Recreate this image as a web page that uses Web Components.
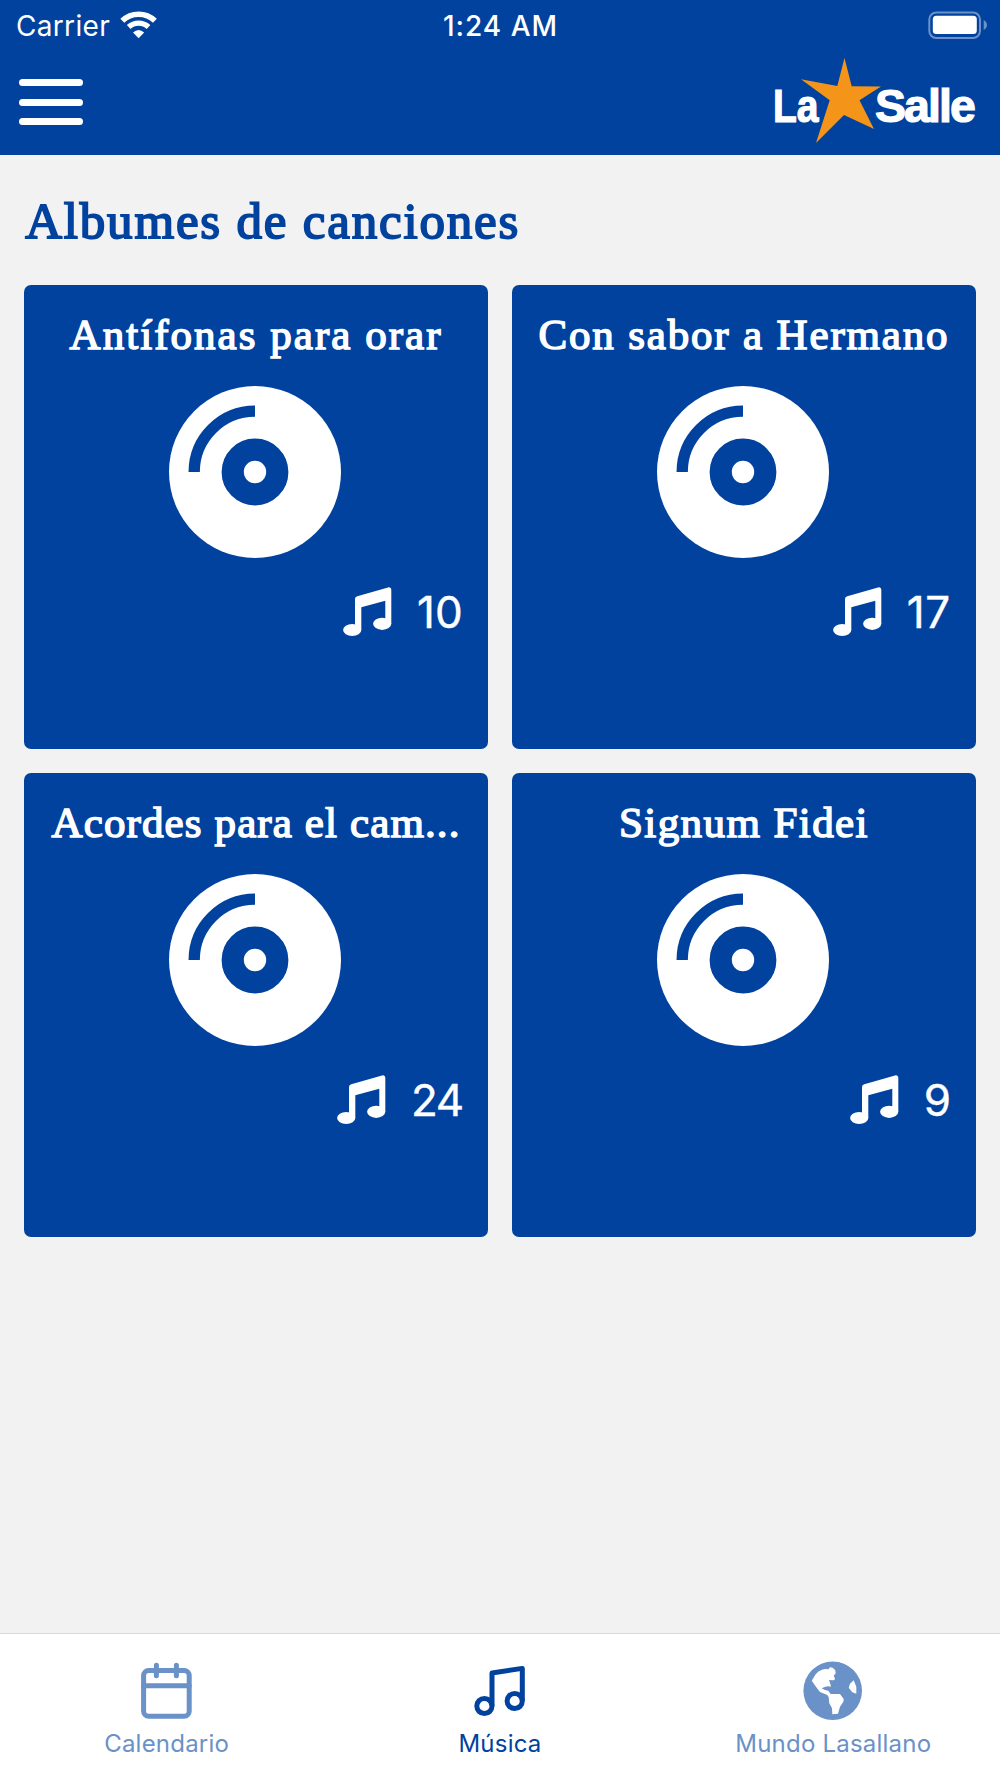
<!DOCTYPE html>
<html lang="es">
<head>
<meta charset="utf-8">
<title>La Salle</title>
<style>
  body {
    margin: 0;
    background: #f2f2f2;
    font-family: Inter, "Liberation Sans", sans-serif;
    --brand: #00429e;
    --muted: #6a91c8;
    --title-font: "Liberation Serif", serif;
  }
</style>
</head>
<body>
<music-app>
  <status-bar slot="top" carrier="Carrier" time="1:24 AM"></status-bar>
  <nav-header slot="top"></nav-header>
  <fit-text slot="title" width="495">Albumes de canciones</fit-text>
  <album-card count="10" count-width="46"><fit-text width="373">Antífonas para orar</fit-text></album-card>
  <album-card count="17" count-width="44"><fit-text width="411">Con sabor a Hermano</fit-text></album-card>
  <album-card count="24" count-width="52"><fit-text width="409">Acordes para el cam...</fit-text></album-card>
  <album-card count="9" count-width="27"><fit-text width="250">Signum Fidei</fit-text></album-card>
  <tab-item slot="tabs" icon="calendar"><fit-text width="125">Calendario</fit-text></tab-item>
  <tab-item slot="tabs" icon="music" active><fit-text width="83">Música</fit-text></tab-item>
  <tab-item slot="tabs" icon="globe"><fit-text width="196">Mundo Lasallano</fit-text></tab-item>
</music-app>

<script>
const createTemplate = html => {
  const template = document.createElement('template');
  template.innerHTML = html;
  return template;
};

const render = (element, template) => {
  element.attachShadow({ mode: 'open' });
  element.shadowRoot.appendChild(template.content.cloneNode(true));
};

const icons = {
  calendar: `
    <svg width="51" height="58" viewBox="0 0 51 58" fill="none" stroke="currentColor" stroke-width="5" stroke-linecap="round">
      <rect x="2.6" y="8.6" width="45.6" height="45.6" rx="5"/>
      <path d="M2.6 23.8H48.2M15.4 3.2V13.8M35.4 3.2V13.8"/>
    </svg>`,
  music: `
    <svg width="51" height="58" viewBox="0 -3 51 58" fill="none" stroke="currentColor" stroke-width="5" stroke-linejoin="round">
      <circle cx="10.4" cy="41" r="7.6"/>
      <circle cx="40.7" cy="36" r="7.6"/>
      <path d="M18 41V8L48.3 3.4V36"/>
    </svg>`,
  globe: `
    <svg width="60" height="58" viewBox="0 1 60 58" overflow="visible">
      <circle cx="29.7" cy="29.7" r="29.3" fill="currentColor"/>
      <path fill="#fff" d="M8.7 19.7L12.7 13.3Q15 10 19 8.7Q22 7.5 25.3 8.3L27 6.3L29.7 6.7L32.3 9.3L32.7 12.3L30.7 14.7L32 17.7Q31.5 19.5 29.7 19.3L26 19L27 21.7L28 25.7Q24 24.5 18.7 27.3L22 29L25.3 29.7L27.7 33H37L40.7 38Q41 40 39.7 41.7L37 45.7L35 52.7L29.3 53.3L29 47.3L26.3 42.3L25.7 36.3L24.3 34L17 31L13.7 26.7Z"/>
      <path fill="#fff" d="M50.7 19.3L53.3 25.7V32.7L49.3 31.3L45.7 26.7L47 22.7Z"/>
    </svg>`
};

// Spreads the letter spacing so that a line takes the given width
class FitText extends HTMLElement {
  constructor() {
    super();
    render(this, createTemplate(`
      <style>
        :host { display: block; white-space: nowrap; }
        span { display: inline-block; }
      </style>
      <span><slot></slot></span>
    `));
  }

  connectedCallback() {
    const width = Number(this.getAttribute('width'));
    const span = this.shadowRoot.querySelector('span');
    const natural = span.getBoundingClientRect().width;
    this.style.width = `${width}px`;
    span.style.letterSpacing = `${(width - natural) / this.textContent.length}px`;
  }
}

const statusBarTemplate = createTemplate(`
  <style>
    :host {
      display: grid;
      grid-template-columns: 1fr auto 1fr;
      align-items: center;
      height: 50px;
      padding: 0 12px 0 16px;
      color: #fff;
      font-size: 28px;
      line-height: 50px;
    }

    .left {
      display: flex;
      align-items: center;
      gap: 10px;
    }

    fit-text { padding-top: 1px; }
    .time { font-weight: 500; margin-left: -3px; }
    .battery { justify-self: end; }
    svg { display: block; }
  </style>
  <div class="left">
    <fit-text class="carrier" width="94"></fit-text>
    <svg width="38" height="50" viewBox="0 0 38 50" fill="none" stroke="#fff">
      <path d="M2.3 19.8A23.5 23.5 0 0 1 34.9 19.8" stroke-width="5.6"/>
      <path d="M8.7 26A14.5 14.5 0 0 1 28.5 26" stroke-width="5.4"/>
      <path d="M13 31.6Q18.6 26.6 24.2 31.6L18.6 37.2Z" fill="#fff" stroke="none"/>
    </svg>
  </div>
  <fit-text class="time" width="115"></fit-text>
  <svg class="battery" width="60" height="50" viewBox="0 0 60 50">
    <rect x="1.3" y="11.5" width="50.7" height="25.5" rx="7" fill="none" stroke="#6a91c8" stroke-width="2"/>
    <rect x="4.8" y="14.8" width="44" height="18.3" rx="3.5" fill="#fff"/>
    <path d="M55.7 19Q59 21 59 24T55.7 29Z" fill="#6a91c8"/>
  </svg>
`);

class StatusBar extends HTMLElement {
  constructor() {
    super();
    render(this, statusBarTemplate);
    this.shadowRoot.querySelector('.carrier').textContent = this.getAttribute('carrier');
    this.shadowRoot.querySelector('.time').textContent = this.getAttribute('time');
  }
}

const navHeaderTemplate = createTemplate(`
  <style>
    :host {
      display: flex;
      justify-content: space-between;
      align-items: flex-start;
      height: 97.5px;
      padding: 7px 16px 0 18.5px;
    }

    button {
      display: flex;
      flex-direction: column;
      gap: 12.3px;
      margin-top: 22.4px;
      padding: 0;
      border: none;
      background: none;
    }

    i {
      width: 64.7px;
      height: 7px;
      border-radius: 4px;
      background: #fff;
    }

    svg { display: block; }

    text {
      font: bold 46.5px "Liberation Sans", Arial, sans-serif;
      fill: #fff;
      stroke: #fff;
      stroke-width: 1.2px;
    }
  </style>
  <button aria-label="Menu"><i></i><i></i><i></i></button>
  <svg width="217" height="87" viewBox="-8 0 217 87" overflow="visible">
    <text x="-2" y="65" textLength="45.5" lengthAdjust="spacingAndGlyphs">La</text>
    <text x="100" y="65" letter-spacing="-1.9">Salle</text>
    <path fill="#f49419" d="M69.5 1L76.7 29.3L106 29.5L84.5 43.3L99 72L69 58L41 86L54.7 43.3L26 22.3L62.3 29Z"/>
  </svg>
`);

class NavHeader extends HTMLElement {
  constructor() {
    super();
    render(this, navHeaderTemplate);
  }
}

const albumCardTemplate = createTemplate(`
  <style>
    :host {
      display: flex;
      flex-direction: column;
      align-items: center;
      box-sizing: border-box;
      height: 463.8px;
      padding-top: 19.7px;
      border-radius: 7px;
      background: var(--brand);
      color: #fff;
    }

    h2 {
      margin: 0;
      font: 43px/60px var(--title-font);
      -webkit-text-stroke: 1.5px;
    }

    svg {
      display: block;
      flex: none;
    }

    .disc { margin: 21.3px 2px 0 0; }

    .count {
      display: flex;
      align-self: stretch;
      justify-content: flex-end;
      align-items: center;
      gap: 24.5px;
      margin-top: 24px;
      padding-right: 25px;
      font-size: 44px;
      line-height: 60px;
      -webkit-text-stroke: .4px;
    }
  </style>
  <h2><slot></slot></h2>
  <svg class="disc" width="172" height="172" viewBox="-86 -86 172 172">
    <circle r="86" fill="#fff"/>
    <circle r="22.3" fill="none" stroke="var(--brand)" stroke-width="22.2"/>
    <path d="M-60.8 0A60.8 60.8 0 0 1 0 -60.8" fill="none" stroke="var(--brand)" stroke-width="11.3"/>
  </svg>
  <div class="count">
    <svg width="49" height="50" viewBox="0 0 49 50" fill="#fff">
      <path d="M12 43V12Q12 10 14.3 9.3L45 .4Q48.3 0 48.3 3V36.7H42.3V13.7L18.3 20.3V43Z"/>
      <ellipse cx="9.2" cy="43" rx="9.1" ry="6.1"/>
      <ellipse cx="39.2" cy="36.8" rx="9.1" ry="6.1"/>
    </svg>
    <fit-text></fit-text>
  </div>
`);

class AlbumCard extends HTMLElement {
  constructor() {
    super();
    render(this, albumCardTemplate);
    const count = this.shadowRoot.querySelector('fit-text');
    count.textContent = this.getAttribute('count');
    count.setAttribute('width', this.getAttribute('count-width'));
  }
}

class TabItem extends HTMLElement {
  constructor() {
    super();
    render(this, createTemplate(`
      <style>
        :host {
          display: flex;
          flex-direction: column;
          align-items: center;
          flex: 1;
          padding-top: 28px;
          color: var(--muted);
          font-size: 24px;
          line-height: 36px;
        }

        :host([active]) { color: var(--brand); }

        svg {
          display: block;
          flex: none;
          margin-bottom: 6px;
        }
      </style>
      ${icons[this.getAttribute('icon')]}
      <slot></slot>
    `));
  }
}

const musicAppTemplate = createTemplate(`
  <style>
    :host {
      display: flex;
      flex-direction: column;
      height: 1778px;
      overflow: hidden;
    }

    header { background: var(--brand); }

    main {
      flex: 1;
      padding: 36px 24.2px 0;
    }

    h1 {
      margin: 0;
      height: 94.5px;
      padding-left: 1px;
      color: var(--brand);
      font: 51px/60px var(--title-font);
      -webkit-text-stroke: 1.8px;
    }

    .albums {
      display: grid;
      grid-template-columns: 1fr 1fr;
      gap: 24.2px;
    }

    nav {
      display: flex;
      box-sizing: border-box;
      height: 145px;
      border-top: 1px solid #d9d9d9;
      background: #fff;
    }
  </style>
  <header><slot name="top"></slot></header>
  <main>
    <h1><slot name="title"></slot></h1>
    <div class="albums"><slot></slot></div>
  </main>
  <nav><slot name="tabs"></slot></nav>
`);

class MusicApp extends HTMLElement {
  constructor() {
    super();
    render(this, musicAppTemplate);
  }
}

// The text element goes last, so that it measures with the final fonts
window.customElements.define('music-app', MusicApp);
window.customElements.define('status-bar', StatusBar);
window.customElements.define('nav-header', NavHeader);
window.customElements.define('album-card', AlbumCard);
window.customElements.define('tab-item', TabItem);
window.customElements.define('fit-text', FitText);
</script>
</body>
</html>
